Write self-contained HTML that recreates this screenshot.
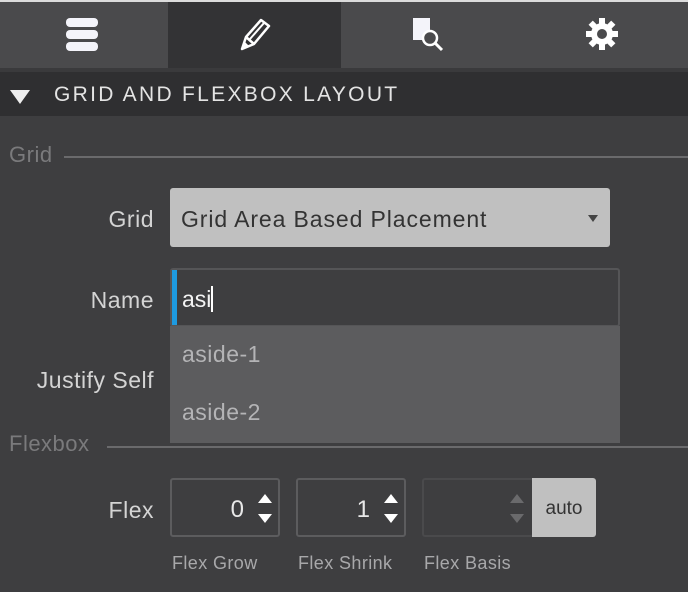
<!DOCTYPE html>
<html><head><style>
*{margin:0;padding:0;box-sizing:border-box}
body{width:688px;height:592px;background:#3e3e40;font-family:"Liberation Sans",sans-serif;position:relative;overflow:hidden}
.a{position:absolute}
.lbl{color:#d4d4d4;font-size:23px;text-align:right;width:154px;left:0;letter-spacing:0.5px}
.legend{color:#7a7a7c;font-size:22px;left:9px;letter-spacing:0.5px}
.hr{height:2px;background:#6a6a6c;right:0}
.box{border:2px solid #5c5c5e;border-radius:3px;height:59px;top:478px}
.num{color:#e8e8e8;font-size:24px;top:16px;right:34px}
.up,.dn{width:0;height:0;border-left:7px solid transparent;border-right:7px solid transparent;right:6px}
.up{border-bottom:9px solid #fff;top:14px}
.dn{border-top:9px solid #fff;top:34px}
.sub{color:#a8a8aa;font-size:18px;top:553px;letter-spacing:0.4px}
</style></head><body>
<div class="a" style="left:0;top:0;width:688px;height:2px;background:#dcdcdc"></div>
<div class="a" style="left:0;top:2px;width:688px;height:66px;background:#4a4a4c"></div>
<div class="a" style="left:168px;top:2px;width:173px;height:66px;background:#333335"></div>
<div class="a" style="left:0;top:68px;width:688px;height:4px;background:#3a3a3c"></div>
<div class="a" style="left:66px;top:18px;width:32px;height:9px;background:#f4f4fa;border-radius:4px"></div>
<div class="a" style="left:66px;top:30px;width:32px;height:9px;background:#f4f4fa;border-radius:4px"></div>
<div class="a" style="left:66px;top:42px;width:32px;height:9px;background:#f4f4fa;border-radius:4px"></div>
<svg class="a" style="left:238px;top:16px" width="36" height="36" viewBox="0 0 36 36"><path d="M4 33 L8 21 L23 4 L31 10 L16 28 Z M8 21 L16 28" fill="none" stroke="#fff" stroke-width="2.5" stroke-linejoin="round"/><path d="M12 23 L26 7" stroke="#fff" stroke-width="2"/><path d="M4 33 L7 26 L11 30Z" fill="#fff"/></svg>
<svg class="a" style="left:410px;top:16px" width="40" height="36" viewBox="0 0 40 36"><rect x="3" y="2" width="17" height="22" fill="#f4f4fa"/><circle cx="20" cy="22" r="7" fill="#4a4a4c" stroke="#fff" stroke-width="2.5"/><path d="M25 27 L32 34" stroke="#fff" stroke-width="3"/></svg>
<svg class="a" style="left:584px;top:16px" width="36" height="36" viewBox="0 0 36 36"><g fill="#fff"><circle cx="18" cy="18" r="11"/><rect x="15" y="2" width="6" height="32"/><rect x="2" y="15" width="32" height="6"/><rect x="15" y="2" width="6" height="32" transform="rotate(45 18 18)"/><rect x="15" y="2" width="6" height="32" transform="rotate(-45 18 18)"/></g><circle cx="18" cy="18" r="5" fill="#4a4a4c"/></svg>
<div class="a" style="left:0;top:72px;width:688px;height:44px;background:#2f2f31"></div>
<div class="a" style="left:10px;top:90px;width:0;height:0;border-left:10px solid transparent;border-right:10px solid transparent;border-top:14px solid #eee"></div>
<div class="a" style="left:54px;top:83px;color:#e4e4e4;font-size:21px;letter-spacing:2.3px">GRID AND FLEXBOX LAYOUT</div>
<div class="a legend" style="top:142px">Grid</div>
<div class="a hr" style="left:64px;top:156px"></div>
<div class="a lbl" style="top:206px">Grid</div>
<div class="a" style="left:170px;top:188px;width:440px;height:59px;background:#c0c0c0;border-radius:3px"></div>
<div class="a" style="left:181px;top:206px;color:#333;font-size:23px;letter-spacing:0.9px">Grid Area Based Placement</div>
<div class="a" style="left:588px;top:215px;width:0;height:0;border-left:5px solid transparent;border-right:5px solid transparent;border-top:7px solid #444"></div>
<div class="a lbl" style="top:287px">Name</div>
<div class="a" style="left:170px;top:268px;width:450px;height:59px;border:2px solid #555557;border-radius:3px;background:#3e3e40"></div>
<div class="a" style="left:172px;top:270px;width:5px;height:55px;background:#1e9ae0"></div>
<div class="a" style="left:182px;top:286px;color:#f4f4f4;font-size:23px">asi<span style="display:inline-block;width:2px;height:26px;background:#fff;vertical-align:-5px"></span></div>
<div class="a lbl" style="top:367px">Justify Self</div>
<div class="a" style="left:170px;top:326px;width:450px;height:117px;background:#5c5c5e"></div>
<div class="a" style="left:182px;top:341px;color:#b4b4b6;font-size:23px;letter-spacing:0.5px">aside-1</div>
<div class="a" style="left:182px;top:399px;color:#b4b4b6;font-size:23px;letter-spacing:0.5px">aside-2</div>
<div class="a legend" style="top:431px">Flexbox</div>
<div class="a hr" style="left:107px;top:446px"></div>
<div class="a lbl" style="top:497px">Flex</div>
<div class="a box" style="left:170px;width:110px"><div class="a num">0</div><div class="a up"></div><div class="a dn"></div></div>
<div class="a box" style="left:296px;width:110px"><div class="a num">1</div><div class="a up"></div><div class="a dn"></div></div>
<div class="a box" style="left:422px;width:112px;border-color:#4a4a4c"><div class="a up" style="right:8px;border-bottom-color:#6a6a6c"></div><div class="a dn" style="right:8px;border-top-color:#6a6a6c"></div></div>
<div class="a" style="left:532px;top:478px;width:64px;height:59px;background:#c0c0c0;border-radius:0 3px 3px 0;color:#333;font-size:19px;text-align:center;line-height:62px">auto</div>
<div class="a sub" style="left:172px">Flex Grow</div>
<div class="a sub" style="left:298px">Flex Shrink</div>
<div class="a sub" style="left:424px">Flex Basis</div>
</body></html>
